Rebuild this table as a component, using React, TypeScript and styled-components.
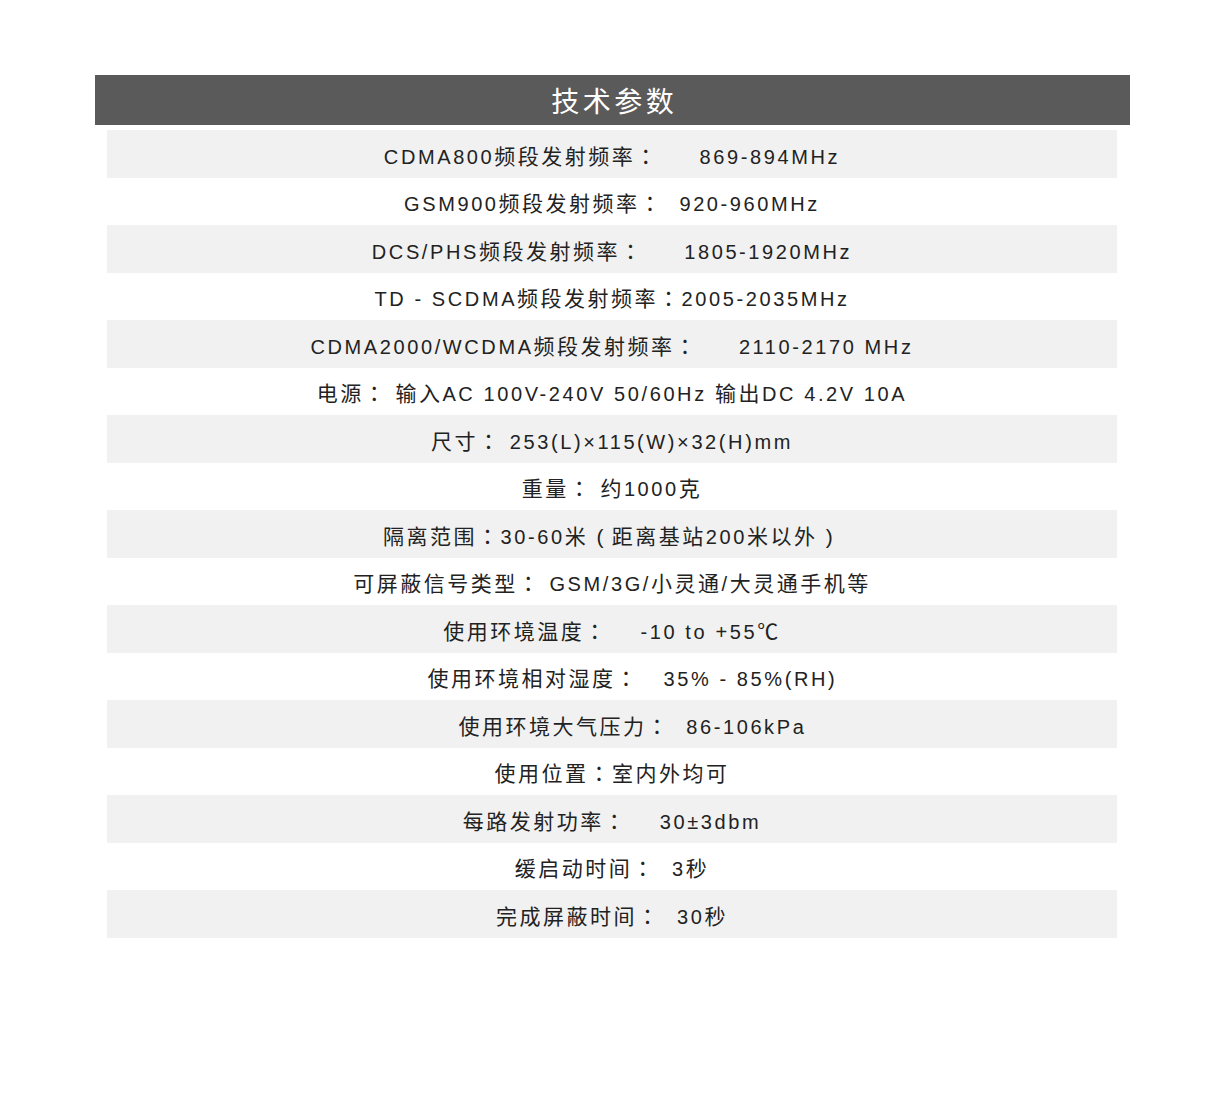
import React from "react"
import styled, { createGlobalStyle } from "styled-components"

const GlobalStyle = createGlobalStyle`
  body {
    margin: 0;
    background: #fff;
    font-family: "Liberation Sans", "Noto Sans CJK SC", sans-serif;
  }
`

const Page = styled.div`
  width: 1226px;
  height: 1107px;
  padding-top: 75px;
  box-sizing: border-box;
`

const Header = styled.div`
  margin-left: 95px;
  width: 1035px;
  height: 50px;
  background: #5b5a5a;
  color: #fff;
  display: flex;
  align-items: center;
  justify-content: center;
  font-family: "Noto Sans CJK SC", sans-serif;
  font-size: 28px;
  letter-spacing: 3.5px;
  padding-left: 3.5px;
  box-sizing: border-box;
`

const Table = styled.div`
  margin-left: 107px;
  margin-top: 5px;
  width: 1010px;
  display: flex;
  flex-direction: column;
`

const Row = styled.div<{ $shaded: boolean }>`
  height: 47.5px;
  padding-top: 2px;
  box-sizing: border-box;
  display: flex;
  align-items: center;
  justify-content: center;
  background: ${(p) => (p.$shaded ? "#f1f1f1" : "#fff")};
`

const Text = styled.span`
  font-size: 20px;
  color: #222;
  white-space: pre;
  letter-spacing: 2.6px;
`

const Cjk = styled.span`
  font-family: "Noto Sans CJK SC", sans-serif;
  font-size: 21px;
  letter-spacing: 2.5px;
`

// full-width colon sits centred in its cell, as in the screenshot
const Punct = styled(Cjk)`
  font-family: "Noto Sans CJK TC", sans-serif;
`

// full-width brackets, drawn centred in a full cell
const Paren = styled.span`
  display: inline-block;
  width: 23.5px;
  text-align: center;
  letter-spacing: 0;
  font-size: 21px;
`

const specs = [
  "CDMA800频段发射频率：     869-894MHz",
  "GSM900频段发射频率：  920-960MHz",
  "DCS/PHS频段发射频率：     1805-1920MHz",
  "TD - SCDMA频段发射频率：2005-2035MHz",
  "CDMA2000/WCDMA频段发射频率：     2110-2170 MHz",
  "电源： 输入AC 100V-240V 50/60Hz 输出DC 4.2V 10A",
  "尺寸： 253(L)×115(W)×32(H)mm",
  "重量： 约1000克",
  "隔离范围：30-60米（距离基站200米以外）",
  "可屏蔽信号类型： GSM/3G/小灵通/大灵通手机等",
  "使用环境温度：    -10 to +55℃",
  "     使用环境相对湿度：   35% - 85%(RH)",
  "     使用环境大气压力：  86-106kPa",
  "使用位置：室内外均可",
  "每路发射功率：    30±3dbm",
  "缓启动时间：  3秒",
  "完成屏蔽时间：  30秒",
]

const PUNCT = /^[\u3000-\u303f\uff00-\uffef]$/
const HAN = /^[\u4e00-\u9fff\u2100-\u214f]+$/

function renderRuns(text: string) {
  const parts = text.split(/([\u4e00-\u9fff\u2100-\u214f]+|[\u3000-\u303f\uff00-\uffef])/)
  return parts.map((part, i) => {
    if (!part) return null
    if (part === "（") return <Paren key={i}>(</Paren>
    if (part === "）") return <Paren key={i}>)</Paren>
    if (PUNCT.test(part)) return <Punct key={i}>{part}</Punct>
    if (HAN.test(part)) return <Cjk key={i}>{part}</Cjk>
    return <React.Fragment key={i}>{part}</React.Fragment>
  })
}

export default function App() {
  return (
    <Page>
      <GlobalStyle />
      <Header>技术参数</Header>
      <Table>
        {specs.map((s, i) => (
          <Row key={i} $shaded={i % 2 === 0}>
            <Text>{renderRuns(s)}</Text>
          </Row>
        ))}
      </Table>
    </Page>
  )
}
